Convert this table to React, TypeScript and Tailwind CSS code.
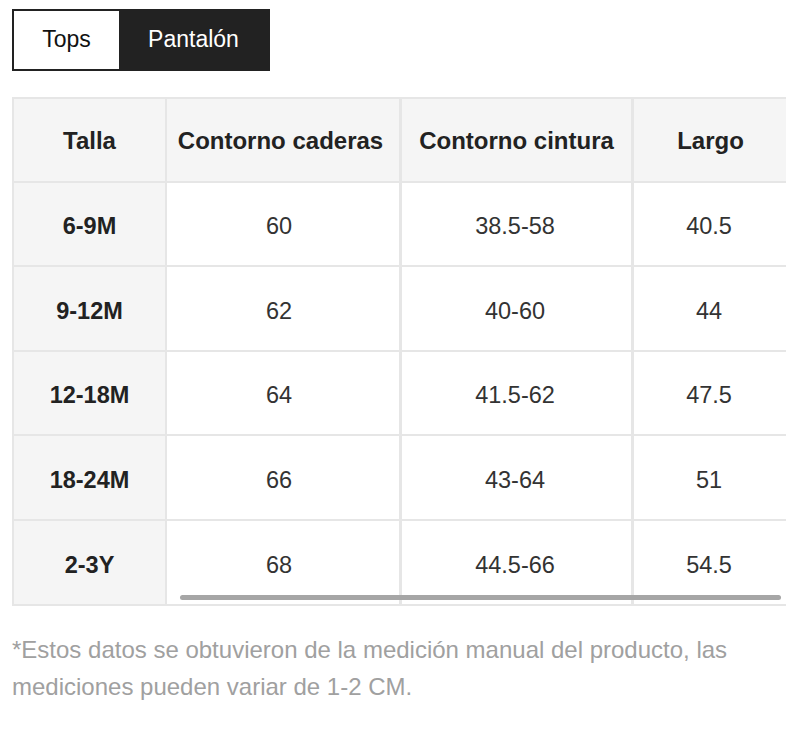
import React from "react";

const rows = [
  ["6-9M", "60", "38.5-58", "40.5"],
  ["9-12M", "62", "40-60", "44"],
  ["12-18M", "64", "41.5-62", "47.5"],
  ["18-24M", "66", "43-64", "51"],
  ["2-3Y", "68", "44.5-66", "54.5"],
];
const rowH = ["h-[84px]", "h-[85px]", "h-[84px]", "h-[85px]", "h-[85px]"];

export default function App() {
  return (
    <div
      className="min-h-[737px] bg-white pl-[12px] pt-[9px]"
      style={{ fontFamily: '"Liberation Sans", Arial, sans-serif' }}
    >
      <div className="flex h-[62px] w-[258px] border-2 border-[#222]">
        <div className="flex w-[105px] items-center justify-center bg-white pb-[2px] text-[23px] text-[#111]">
          Tops
        </div>
        <div className="flex flex-1 items-center justify-center bg-[#222] pb-[2px] text-[23px] text-white">
          Pantalón
        </div>
      </div>

      <div className="relative mt-[26px] w-[774px] overflow-hidden">
        <div className="grid w-[776px] grid-cols-[153px_235px_232px_156px] border-l-2 border-t-2 border-[#e6e6e6]">
          {["Talla", "Contorno caderas", "Contorno cintura", "Largo"].map((h, i) => (
            <div
              key={h}
              className={`flex h-[84px] items-center justify-center border-b-2 border-[#e6e6e6] bg-[#f5f5f5] pt-[2px] text-[24px] font-bold text-[#222] ${
                i === 0 ? "border-r-2" : i === 1 ? "border-r-[3px] pr-[5px]" : "border-r-[3px]"
              }`}
            >
              {h}
            </div>
          ))}
          {rows.map((r, ri) =>
            r.map((c, ci) => (
              <div
                key={ri + "-" + ci}
                className={`flex ${rowH[ri]} items-center justify-center border-b-2 border-[#e6e6e6] pt-[6px] text-[23.5px] ${
                  ci === 0
                    ? "border-r-2 bg-[#f5f5f5] font-bold text-[#222]"
                    : ci === 1
                    ? "border-r-[3px] bg-white pr-[8px] text-[#333]"
                    : "border-r-[3px] bg-white pr-[3px] text-[#333]"
                }`}
              >
                {c}
              </div>
            ))
          )}
        </div>
        <div className="absolute bottom-[6px] left-[168px] right-[5px] h-[5px] rounded-full bg-[#a6a6a6]" />
      </div>

      <p className="mt-[25px] w-[774px] text-[24px] leading-[37px] text-[#a0a0a0]">
        *Estos datos se obtuvieron de la medición manual del producto, las mediciones pueden variar de 1-2 CM.
      </p>
    </div>
  );
}
